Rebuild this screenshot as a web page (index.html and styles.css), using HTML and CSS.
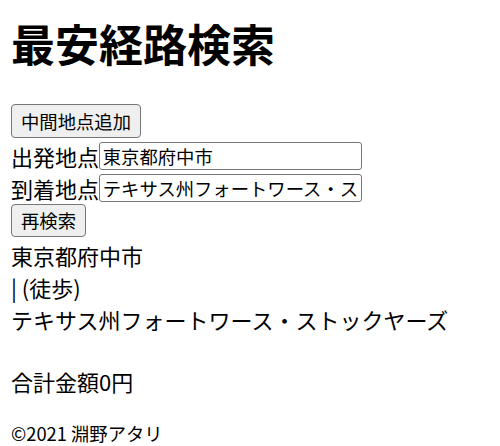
FILE: index.html
```html
<!DOCTYPE html>
<html lang="ja">
<head>
<meta charset="utf-8">
<title>最安経路検索</title>
<link rel="stylesheet" href="styles.css">
</head>
<body>
<h1 class="title">最安経路検索</h1>
<main class="search">
  <button class="btn" type="button">中間地点追加</button>
  <div class="field"><label class="label" for="from">出発地点</label><input class="input" id="from" type="text" value="東京都府中市"></div>
  <div class="field"><label class="label" for="to">到着地点</label><input class="input" id="to" type="text" value="テキサス州フォートワース・ストックヤーズ"></div>
  <button class="btn" type="button">再検索</button>
  <div class="route">
    <div class="stop">東京都府中市</div>
    <div class="leg">| (徒歩)</div>
    <div class="stop">テキサス州フォートワース・ストックヤーズ</div>
  </div>
  <p class="total">合計金額0円</p>
</main>
<footer class="footer">©2021 淵野アタリ</footer>
</body>
</html>
```
FILE: styles.css
```css
html, body {
  background: #fff;
}
body {
  margin: 11px 11px 0;
  font-family: "Noto Sans CJK JP", "Noto Sans", sans-serif;
  font-size: 22px;
  line-height: 32px;
  color: #000;
}
.title {
  font-size: 44px;
  line-height: 64px;
  font-weight: bold;
  margin: 0 0 29px;
}
.search {
  display: block;
}
.btn {
  display: block;
  box-sizing: border-box;
  height: 33.5px;
  font-family: "Noto Sans CJK JP", "Noto Sans", sans-serif;
  font-size: 18.33px;
  line-height: 26px;
  padding: 0 9px;
  border: 1.375px solid #767676;
  border-radius: 4px;
  background: #efefef;
  color: #000;
  margin: 0 0 2px;
}
.field {
  display: flex;
  align-items: center;
  height: 32px;
}
.label {
  display: block;
  white-space: nowrap;
}
.input {
  font-family: "Noto Sans CJK JP", "Noto Sans", sans-serif;
  font-size: 18.33px;
  width: 263px;
  height: 28px;
  box-sizing: border-box;
  padding: 0 2.75px;
  border: 1.375px solid #767676;
  border-radius: 3px;
  margin: 0;
  color: #000;
  background: #fff;
}
.route {
  margin: 0;
}
.total {
  margin: 30px 0 0;
}
.footer {
  margin-top: 24px;
  font-size: 18.33px;
  line-height: 24px;
}
```
